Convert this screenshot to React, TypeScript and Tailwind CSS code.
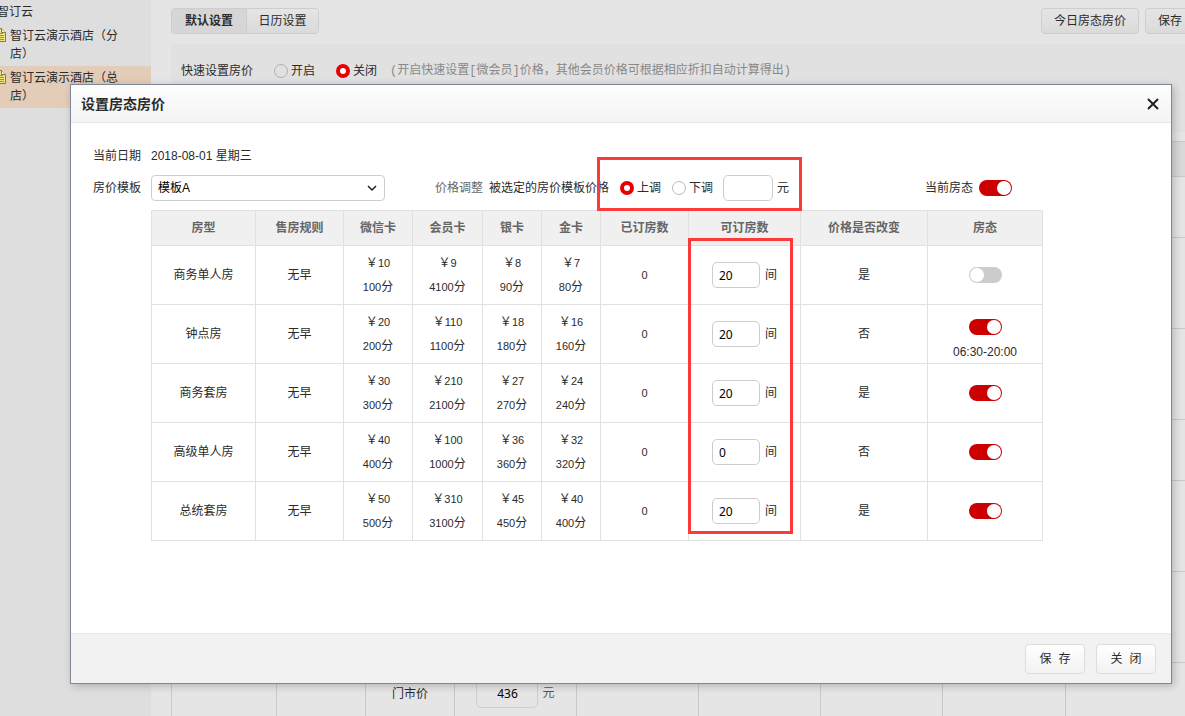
import { useState } from "react";
import type { ReactNode } from "react";

type Room = {
  name: string;
  prices: [string, string][];
  booked: number;
  available: string;
  changed: string;
  open: boolean;
  hours?: string;
};

const rooms: Room[] = [
  { name: "商务单人房", prices: [["10", "100"], ["9", "4100"], ["8", "90"], ["7", "80"]], booked: 0, available: "20", changed: "是", open: false },
  { name: "钟点房", prices: [["20", "200"], ["110", "1100"], ["18", "180"], ["16", "160"]], booked: 0, available: "20", changed: "否", open: true, hours: "06:30-20:00" },
  { name: "商务套房", prices: [["30", "300"], ["210", "2100"], ["27", "270"], ["24", "240"]], booked: 0, available: "20", changed: "是", open: true },
  { name: "高级单人房", prices: [["40", "400"], ["100", "1000"], ["36", "360"], ["32", "320"]], booked: 0, available: "0", changed: "否", open: true },
  { name: "总统套房", prices: [["50", "500"], ["310", "3100"], ["45", "450"], ["40", "400"]], booked: 0, available: "20", changed: "是", open: true },
];

const headings = ["房型", "售房规则", "微信卡", "会员卡", "银卡", "金卡", "已订房数", "可订房数", "价格是否改变", "房态"];

function Radio({ name, label, defaultChecked, dim }: { name: string; label: string; defaultChecked?: boolean; dim?: boolean }) {
  return (
    <label className="flex items-center gap-[3px] whitespace-nowrap">
      <input
        type="radio"
        name={name}
        defaultChecked={defaultChecked}
        className={`size-[14px] shrink-0 appearance-none rounded-full border checked:border-4 checked:border-[#e60000] checked:bg-white ${dim ? "border-[#b0b0b0]" : "border-[#bbb]"}`}
      />
      {label}
    </label>
  );
}

function Switch({ initial, label }: { initial: boolean; label: string }) {
  const [on, setOn] = useState(initial);
  return (
    <button
      type="button"
      role="switch"
      aria-checked={on}
      aria-label={label}
      onClick={() => setOn(!on)}
      className={`flex h-4 w-[33px] shrink-0 items-center rounded-full p-px ${on ? "justify-end bg-[#c00]" : "justify-start bg-[#ccc]"}`}
    >
      <span className="size-[14px] rounded-full bg-white" />
    </button>
  );
}

function PageIcon() {
  return (
    <svg className="absolute top-1 left-[-6px] h-[14px] w-[12px]" viewBox="0 0 12 14" aria-hidden="true">
      <path d="M.5.5h7l4 4v9H.5z" fill="#eee67c" stroke="#85775c" />
      <path d="M7.5.5v4h4" fill="#f7f3cf" stroke="#85775c" />
      <path d="M3 5.5h6M3 7.5h7M3 9.5h7M3 11.5h7" stroke="#98906a" />
    </svg>
  );
}

function TreeItem({ children, selected }: { children: ReactNode; selected?: boolean }) {
  return (
    <li className={`relative py-[3px] pr-[30px] pl-[10px] ${selected ? "bg-[#e3cdb9]" : ""}`}>
      <PageIcon />
      <a href="#" className="block leading-[18px]">{children}</a>
    </li>
  );
}

function BackgroundRow({ height, children }: { height: string; children?: ReactNode }) {
  return (
    <tr className={`${height} align-top`}>
      <td className="border border-[#c8c8c8]" />
      <td className="border border-[#c8c8c8]" />
      {children ?? (
        <>
          <td className="border border-[#c8c8c8]" />
          <td className="border border-[#c8c8c8]" />
        </>
      )}
      <td className="border border-[#c8c8c8]" />
      <td className="border border-[#c8c8c8]" />
      <td className="border border-[#c8c8c8]" />
      <td className="border border-[#c8c8c8]" />
      <td className="border border-[#c8c8c8]" />
    </tr>
  );
}

function Dialog() {
  return (
    <section
      role="dialog"
      aria-labelledby="dialog-title"
      className="absolute top-[84px] right-[13px] left-[70px] border border-[#7d8894] bg-white shadow-[2px_2px_8px_rgba(0,0,0,0.22)]"
    >
      <header className="flex h-[38px] items-center justify-between border-b border-[#e8e8e8] bg-linear-to-b from-[#fdfdfd] to-[#f4f4f4] px-[10px]">
        <h1 id="dialog-title" className="text-sm font-bold">设置房态房价</h1>
        <button type="button" aria-label="关闭窗口" className="flex size-4 items-center justify-center">
          <svg className="size-3" viewBox="0 0 12 12" aria-hidden="true">
            <path d="M1 1l10 10M11 1L1 11" stroke="#222" strokeWidth="2" />
          </svg>
        </button>
      </header>

      <div className="pt-6 pr-5 pb-[92px] pl-[22px]">
        <div className="flex h-[18px] items-center">
          <span className="w-[58px]">当前日期</span>
          <span>2018-08-01 星期三</span>
        </div>

        <div className="mt-[10px] flex h-[26px] items-center whitespace-nowrap">
          <label htmlFor="template" className="w-[58px] shrink-0">房价模板</label>
          <div className="relative w-[234px] shrink-0">
            <select id="template" className="h-[26px] w-full appearance-none rounded border border-[#ccc] bg-white pl-[6px] text-black">
              <option>模板A</option>
            </select>
            <svg className="pointer-events-none absolute top-[10px] right-2 h-[7px] w-[10px]" viewBox="0 0 10 7" aria-hidden="true">
              <path d="M1 1l4 4 4-4" fill="none" stroke="#222" strokeWidth="1.5" />
            </svg>
          </div>
          <span className="ml-[50px] text-[#666]">价格调整</span>
          <span className="ml-[6px]">被选定的房价模板价格</span>
          <div className="relative z-10 ml-[11px] flex items-center">
            <Radio name="direction" label="上调" defaultChecked />
            <div className="ml-[11px]">
              <Radio name="direction" label="下调" />
            </div>
            <input aria-label="调整金额" className="ml-[10px] h-[26px] w-[50px] rounded-[5px] border border-[#ccc] px-[6px]" />
            <span className="ml-1">元</span>
            <div className="pointer-events-none absolute -top-[18px] -right-[13px] -bottom-[10px] -left-[23px] border-3 border-[#fd3a3a]" />
          </div>
          <span className="ml-[136px] mr-[6px]">当前房态</span>
          <Switch initial label="当前房态" />
        </div>

        <div className="relative mt-[9px] ml-[58px] max-w-[892px]">
          <table className="w-full table-fixed border-collapse text-center">
            <colgroup>
              <col className="w-[104px]" />
              <col className="w-[88px]" />
              <col className="w-[69px]" />
              <col className="w-[70px]" />
              <col className="w-[59px]" />
              <col className="w-[59px]" />
              <col className="w-[88px]" />
              <col className="w-[112px]" />
              <col className="w-[127px]" />
              <col className="w-[115px]" />
            </colgroup>
            <thead>
              <tr className="h-[35px] bg-[#f0f0f0] text-[#666]">
                {headings.map((h) => (
                  <th key={h} className="border border-[#e1e1e1] font-bold">{h}</th>
                ))}
              </tr>
            </thead>
            <tbody>
              {rooms.map((room) => (
                <tr key={room.name} className="h-[59px]">
                  <td className="border border-[#e1e1e1]">{room.name}</td>
                  <td className="border border-[#e1e1e1]">无早</td>
                  {room.prices.map(([price, points], i) => (
                    <td key={i} className="border border-[#e1e1e1] leading-6">
                      <div>￥<span className="text-[11px]">{price}</span></div>
                      <div><span className="text-[11px]">{points}</span>分</div>
                    </td>
                  ))}
                  <td className="border border-[#e1e1e1] text-[11px]">{room.booked}</td>
                  <td className="border border-[#e1e1e1]">
                    <label className="flex items-center justify-center gap-[5px]">
                      <input
                        defaultValue={room.available}
                        className="h-[26px] w-12 rounded-[5px] border border-[#ccc] bg-white px-[6px] font-['Noto_Sans',sans-serif] text-black"
                      />
                      间
                    </label>
                  </td>
                  <td className="border border-[#e1e1e1]">{room.changed}</td>
                  <td className="border border-[#e1e1e1]">
                    <div className={`flex flex-col items-center gap-2 ${room.hours ? "pt-3" : ""}`}>
                      <Switch initial={room.open} label={`${room.name}房态`} />
                      {room.hours && <span>{room.hours}</span>}
                    </div>
                  </td>
                </tr>
              ))}
            </tbody>
          </table>
          <div className="pointer-events-none absolute top-[28px] bottom-[7px] left-[537px] w-[105px] border-3 border-[#fd3a3a]" />
        </div>
      </div>

      <footer className="flex h-[50px] items-center justify-end gap-[11px] border-t border-[#ebebeb] bg-[#f2f2f2] px-[15px]">
        {["保 存", "关 闭"].map((text) => (
          <button
            key={text}
            type="button"
            className="h-[30px] w-[60px] rounded border border-[#ddd] bg-linear-to-b from-white to-[#f2f2f2] pt-[2px] font-['Liberation_Mono','Noto_Sans_CJK_SC',monospace]"
          >
            {text}
          </button>
        ))}
      </footer>
    </section>
  );
}

export default function App() {
  return (
    <div className="relative flex h-screen min-h-[700px] overflow-hidden bg-[#e5e5e5] font-['Liberation_Sans','Noto_Sans_CJK_SC',sans-serif] text-xs leading-[18px] text-[#2b2b2b]">
      <aside className="w-[151px] shrink-0 overflow-hidden bg-[#dedede]">
        <p className="-ml-[3px] h-6 leading-6">智订云</p>
        <ul>
          <TreeItem>智订云演示酒店（分店）</TreeItem>
          <TreeItem selected>智订云演示酒店（总店）</TreeItem>
        </ul>
      </aside>

      <main className="-mr-[10px] min-w-0 flex-1 pt-2 pl-5">
        <div className="flex items-center justify-between">
          <div className="flex h-[26px] overflow-hidden rounded border border-[#cdcdcd]">
            <button type="button" className="w-[74px] bg-[#d6d6d6] font-bold">默认设置</button>
            <button type="button" className="w-[72px] border-l border-[#cdcdcd] bg-linear-to-b from-[#e5e5e5] to-[#dadada]">日历设置</button>
          </div>
          <div className="flex gap-[6px]">
            <button type="button" className="h-[26px] rounded border border-[#cdcdcd] bg-linear-to-b from-[#e5e5e5] to-[#dadada] px-3">今日房态房价</button>
            <button type="button" className="h-[26px] rounded border border-[#cdcdcd] bg-linear-to-b from-[#e5e5e5] to-[#dadada] px-3">保存</button>
          </div>
        </div>

        <div className="mt-[10px] flex h-[88px] items-start bg-[#e1e1e1] pt-[18px] pl-[10px] whitespace-nowrap">
          <span className="mr-[21px]">快速设置房价</span>
          <div className="mr-[21px]"><Radio name="quick" label="开启" dim /></div>
          <Radio name="quick" label="关闭" defaultChecked dim />
          <span className="ml-[13px] font-['Liberation_Mono','Noto_Sans_CJK_SC',monospace] text-[#888]">(开启快速设置[微会员]价格，其他会员价格可根据相应折扣自动计算得出)</span>
        </div>

        <table className="mt-[9px] w-full table-fixed border-collapse text-center">
          <colgroup>
            <col className="w-[105px]" />
            <col className="w-[89px]" />
            <col className="w-[89px]" />
            <col className="w-[122px]" />
            <col className="w-[122px]" />
            <col className="w-[122px]" />
            <col className="w-[122px]" />
            <col className="w-[123px]" />
            <col />
          </colgroup>
          <thead className="bg-[#d9d9d9]">
            <BackgroundRow height="h-[35px]" />
          </thead>
          <tbody>
            <BackgroundRow height="h-[61px]" />
            <BackgroundRow height="h-[91px]" />
            <BackgroundRow height="h-[91px]" />
            <BackgroundRow height="h-[61px]" />
            <BackgroundRow height="h-[91px]" />
            <BackgroundRow height="h-[91px]" />
            <BackgroundRow height="h-[91px]">
              <td className="border border-[#c8c8c8] pt-[22px]">
                <label htmlFor="rack-rate">门市价</label>
              </td>
              <td className="border border-[#c8c8c8] pt-[15px] text-[#555]">
                <div className="flex items-center justify-center gap-1">
                  <input
                    id="rack-rate"
                    defaultValue="436"
                    className="h-[30px] w-[62px] rounded-[5px] border border-[#cfcfcf] bg-[#e5e5e5] text-center font-['Noto_Sans',sans-serif] text-black"
                  />
                  元
                </div>
              </td>
            </BackgroundRow>
          </tbody>
        </table>
      </main>

      <Dialog />
    </div>
  );
}
